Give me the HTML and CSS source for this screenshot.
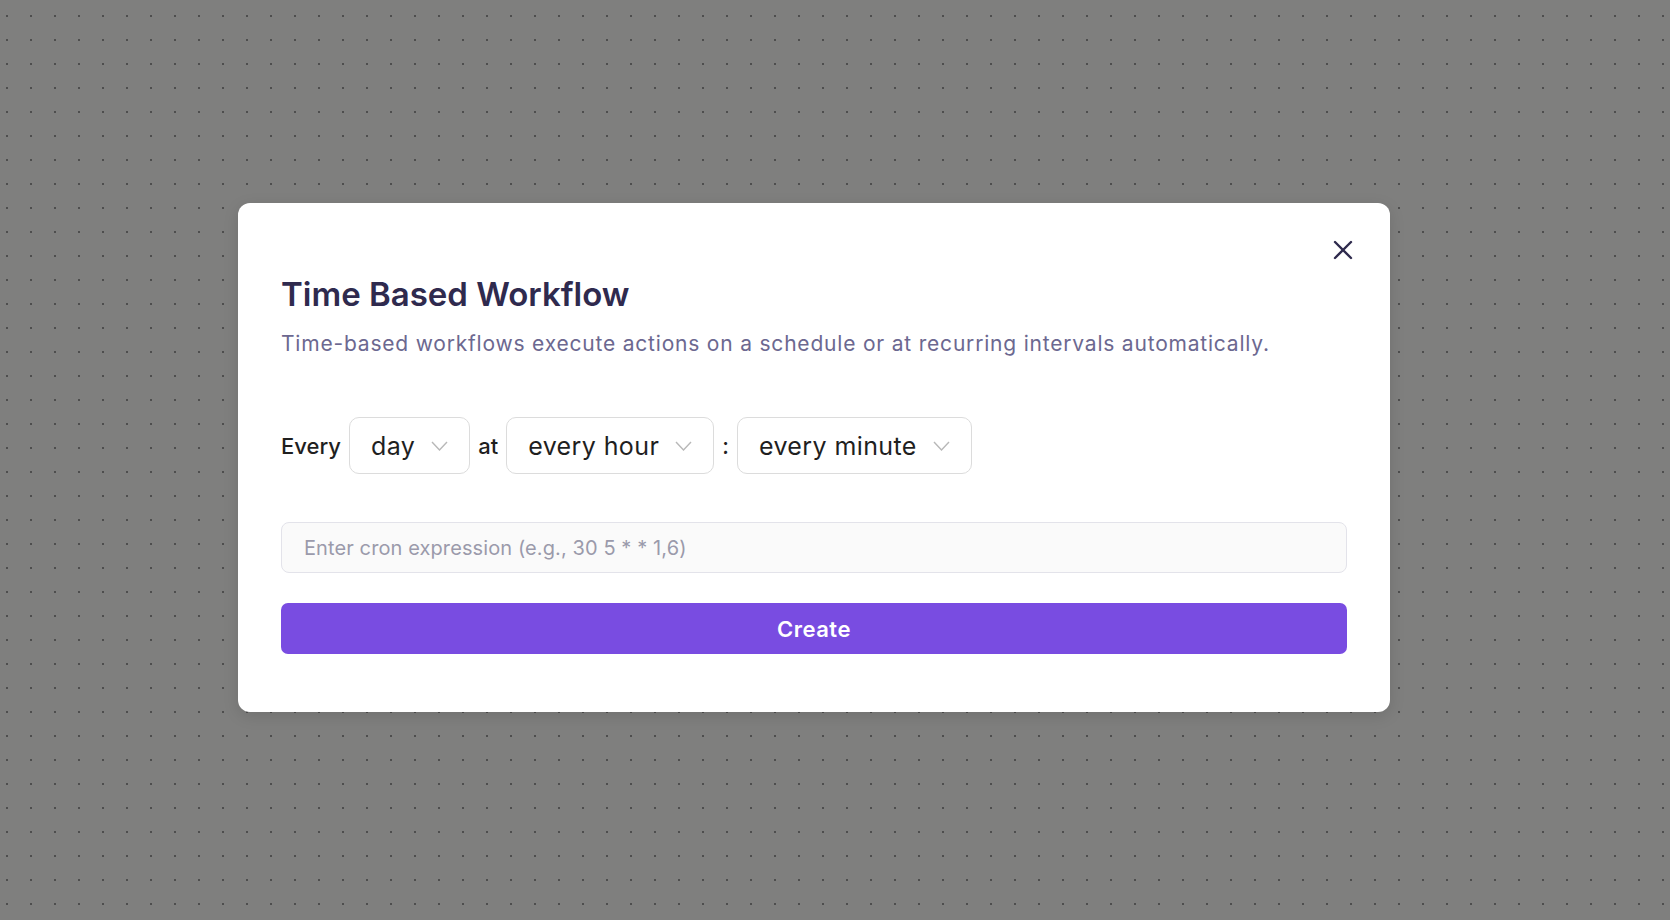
FILE: index.html
```html
<!DOCTYPE html>
<html lang="en">
<head>
    <meta charset="UTF-8">
    <meta name="viewport" content="width=device-width, initial-scale=1.0">
    <title>Time Based Workflow</title>
    <link rel="stylesheet" href="styles.css">
</head>
<body>
    <div class="overlay">
        <div class="modal">
            <button class="close-button" aria-label="Close">
                <svg width="20" height="20" viewBox="0 0 20 20">
                    <path d="M2 2 L18 18 M18 2 L2 18" stroke="#2e2a4d" stroke-width="2.4" stroke-linecap="round" fill="none"/>
                </svg>
            </button>

            <h2 class="title">Time Based Workflow</h2>
            <p class="subtitle">Time-based workflows execute actions on a schedule or at recurring intervals automatically.</p>

            <div class="schedule-row">
                <span class="label">Every</span>
                <div class="select">
                    <span>day</span>
                    <svg class="chevron" width="17" height="10" viewBox="0 0 17 10"><path d="M1 1 L8.5 9 L16 1" stroke="#b8b8b8" stroke-width="1.4" fill="none"/></svg>
                </div>
                <span class="label">at</span>
                <div class="select">
                    <span>every hour</span>
                    <svg class="chevron" width="17" height="10" viewBox="0 0 17 10"><path d="M1 1 L8.5 9 L16 1" stroke="#b8b8b8" stroke-width="1.4" fill="none"/></svg>
                </div>
                <span class="label">:</span>
                <div class="select">
                    <span>every minute</span>
                    <svg class="chevron" width="17" height="10" viewBox="0 0 17 10"><path d="M1 1 L8.5 9 L16 1" stroke="#b8b8b8" stroke-width="1.4" fill="none"/></svg>
                </div>
            </div>

            <input class="cron-input" type="text" placeholder="Enter cron expression (e.g., 30 5 * * 1,6)">

            <button class="create-button">Create</button>
        </div>
    </div>
</body>
</html>
```

FILE: styles.css
```css
html, body {
    margin: 0;
    padding: 0;
    height: 100%;
}

body {
    font-family: Inter, "Open Sans", sans-serif;
    background-color: #7f7f7e;
    background-image: radial-gradient(circle, #4e4e4e 0.9px, transparent 1.3px);
    background-size: 24px 24px;
    background-position: -5px 4px;
}

.overlay {
    padding: 203px 0 0 238px;
}

.modal {
    position: relative;
    box-sizing: border-box;
    width: 1152px;
    height: 509px;
    padding: 71px 43px 0 43px;
    background-color: #fff;
    border-radius: 12px;
    box-shadow: 0 4px 16px rgba(0, 0, 0, 0.12);
    display: flex;
    flex-direction: column;
}

.close-button {
    position: absolute;
    top: 36px;
    right: 36px;
    width: 22px;
    height: 22px;
    padding: 1px;
    border: none;
    background: transparent;
    cursor: pointer;
}

.title {
    margin: 0;
    font-size: 33px;
    font-weight: 600;
    line-height: 40px;
    color: #2f2a4e;
}

.subtitle {
    margin: 16px 0 0 0;
    font-size: 21px;
    letter-spacing: 0.8px;
    line-height: 28px;
    color: #6c6890;
}

.schedule-row {
    display: flex;
    align-items: center;
    gap: 8px;
    margin-top: 59px;
}

.label {
    font-size: 22px;
    font-weight: 500;
    color: #1f1f1f;
}

.select {
    box-sizing: border-box;
    height: 57px;
    display: flex;
    align-items: center;
    gap: 16px;
    padding: 0 21px;
    border: 1px solid #dcdcdc;
    border-radius: 10px;
    font-size: 25px;
    letter-spacing: 0.4px;
    color: #1f1f1f;
    background-color: #fff;
}

.chevron {
    margin-top: 1px;
}

.cron-input {
    box-sizing: border-box;
    width: 100%;
    height: 51px;
    margin-top: 48px;
    padding: 0 22px;
    border: 1px solid #e3e3ea;
    border-radius: 8px;
    background-color: #fafafa;
    font-family: inherit;
    font-size: 20px;
    letter-spacing: 0.1px;
    color: #1f1f1f;
    outline: none;
}

.cron-input::placeholder {
    color: #9b9aab;
}

.create-button {
    width: 100%;
    height: 51px;
    margin-top: 30px;
    border: none;
    border-radius: 7px;
    background-color: #794ce1;
    color: #fff;
    font-family: inherit;
    font-size: 22px;
    letter-spacing: 0.5px;
    font-weight: 600;
    cursor: pointer;
}
```
